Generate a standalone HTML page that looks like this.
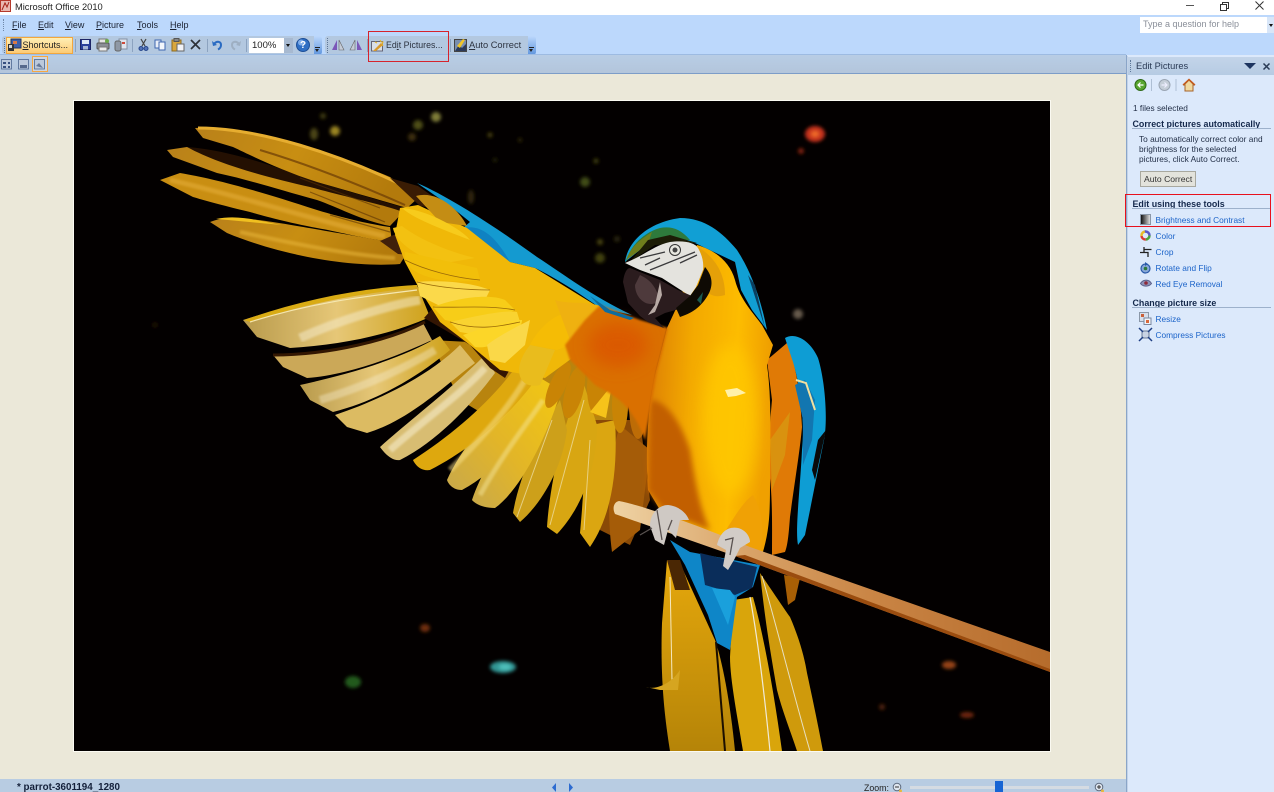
<!DOCTYPE html>
<html><head><meta charset="utf-8"><title>Microsoft Office 2010</title>
<style>
html,body{margin:0;padding:0;width:1274px;height:792px;overflow:hidden;background:#ebe8d9}
body{position:relative;font-family:"Liberation Sans",sans-serif;font-size:9px;color:#1a2030;filter:blur(.3px)}
.a{position:absolute}
.t{position:absolute;white-space:nowrap;line-height:11px}
.l{color:#1b63c9}
u{text-decoration:underline}
.h{font-weight:bold;color:#14284b;font-size:8.900px}
.r{position:absolute}
.p{font-size:8.300px;color:#1f2c44}
svg{position:absolute;overflow:visible}
</style></head><body>
<!-- title bar -->
<div class="a" style="left:0;top:0;width:1274px;height:15px;background:#fff"></div>
<svg style="left:0;top:0" width="12" height="13"><rect x=".5" y=".5" width="10" height="11" fill="#e9b9b0" stroke="#b5392c"/><path d="M2 10L5 3l2 4 2-5" stroke="#a52418" fill="none"/></svg>
<div class="t" style="left:15px;top:2px;font-size:9.300px;color:#222">Microsoft Office 2010</div>
<div class="a" style="left:1186px;top:5px;width:8px;height:1px;background:#555"></div>
<svg style="left:1220px;top:2px" width="9" height="9"><path d="M.5 2.500h6v6h-6zM2.500 2V.5h6v6H7" fill="none" stroke="#333"/></svg>
<svg style="left:1255px;top:1px" width="9" height="9"><path d="M.5.5l8 8M8.500.5l-8 8" stroke="#333" fill="none"/></svg>
<!-- menu & toolbar bg -->
<div class="a" style="left:0;top:15px;width:1274px;height:40px;background:#bcd8fc"></div>
<div class="t" style="left:12px;top:20px"><u>F</u>ile</div>
<div class="t" style="left:38px;top:20px"><u>E</u>dit</div>
<div class="t" style="left:65px;top:20px"><u>V</u>iew</div>
<div class="t" style="left:96px;top:20px"><u>P</u>icture</div>
<div class="t" style="left:137px;top:20px"><u>T</u>ools</div>
<div class="t" style="left:170px;top:20px"><u>H</u>elp</div>
<div class="a" style="left:3px;top:19px;width:1px;height:12px;border-left:1px dotted #6f87a8"></div>
<div class="a" style="left:1140px;top:17px;width:127px;height:16px;background:#fff"></div>
<div class="t" style="left:1143px;top:19px;color:#8a8f99;font-size:9px">Type a question for help</div>
<div class="a" style="left:1267px;top:17px;width:7px;height:16px;background:#d8e6f8"></div>
<div class="a" style="left:1269px;top:24px;border:2.500px solid transparent;border-top:3px solid #111;border-bottom:0"></div>
<!-- toolbar 1 -->
<div class="a" style="left:2px;top:36px;width:312px;height:18px;background:#b3c8e0;border-radius:3px 0 0 3px"></div>
<div class="a" style="left:314px;top:36px;width:8px;height:19px;background:linear-gradient(#bcd8fc,#5f95dd);border-radius:0 3px 3px 0"></div>
<div class="a" style="left:4px;top:38px;width:1px;height:15px;border-left:1px dotted #5d7698"></div>
<div class="a" style="left:6px;top:37px;width:65px;height:15px;background:linear-gradient(#ffefb5,#fbcb76);border:1px solid #f2a73e"></div>
<svg style="left:8px;top:39px" width="14" height="13"><rect x="3" y="0" width="10" height="9" fill="#3d5fa8" stroke="#26355f"/><rect x="5" y="2" width="4" height="3" fill="#d97a48"/><rect x="0" y="5" width="6" height="7" fill="#333"/><rect x="1" y="6" width="3" height="3" fill="#d4d4d4"/></svg>
<div class="t" style="left:22.500px;top:39.500px;color:#222;font-size:9px"><u>S</u>hortcuts...</div>
<div class="r" style="left:75px;top:39px;width:1px;height:13px;background:#8ca3c0"></div>
<svg style="left:80px;top:39px" width="12" height="12"><rect x=".5" y=".5" width="10" height="10" fill="#2b3f9a" stroke="#1c2466"/><rect x="2" y="1" width="7" height="4" fill="#dfe8f6"/><rect x="3" y="7" width="5" height="3.500" fill="#a9b7d6"/></svg>
<svg style="left:96px;top:38px" width="14" height="14"><rect x="3" y="1" width="8" height="5" fill="#e5e5e5" stroke="#777"/><rect x="1" y="5" width="12" height="6" rx="1" fill="#8b8e96" stroke="#555"/><rect x="3" y="9" width="8" height="4" fill="#eee" stroke="#777"/><circle cx="11" cy="3" r="2" fill="#6cab4a"/></svg>
<svg style="left:114px;top:38px" width="14" height="14"><rect x="5" y="1" width="8" height="10" fill="#dfe5ee" stroke="#8391a5"/><rect x="1" y="3" width="6" height="10" rx="2" fill="#8f98a5" stroke="#666"/><rect x="8" y="4" width="3" height="2" fill="#cf4a3a"/></svg>
<div class="r" style="left:132px;top:39px;width:1px;height:13px;background:#8ca3c0"></div>
<svg style="left:138px;top:38px" width="11" height="14"><path d="M3 1l4 7M8 1L4 8" stroke="#444" fill="none" stroke-width="1.200"/><circle cx="3" cy="10.500" r="2" fill="#5473b8" stroke="#25468c"/><circle cx="8" cy="10.500" r="2" fill="#5473b8" stroke="#25468c"/></svg>
<svg style="left:154px;top:39px" width="13" height="12"><rect x="1" y="1" width="6" height="8" fill="#e8eef8" stroke="#3e66b0"/><rect x="5" y="3" width="6" height="8" fill="#f4f7fc" stroke="#3e66b0"/></svg>
<svg style="left:171px;top:38px" width="14" height="14"><rect x="1" y="2" width="9" height="11" fill="#d9a73e" stroke="#8b6a20"/><rect x="3" y="0.500" width="5" height="3" fill="#888" stroke="#555"/><rect x="6" y="6" width="7" height="7" fill="#f2f3f6" stroke="#666"/></svg>
<svg style="left:190px;top:39px" width="11" height="11"><path d="M1 1l9 9M10 1L1 10" stroke="#2d3138" stroke-width="1.700" fill="none"/></svg>
<div class="r" style="left:207px;top:39px;width:1px;height:13px;background:#8ca3c0"></div>
<svg style="left:212px;top:40px" width="11" height="10"><path d="M2 4c3-3.500 7-2.500 7 1 0 2-1 3.500-3 4.500" stroke="#2a6bc2" stroke-width="2" fill="none"/><path d="M0 1l1 5 4-1z" fill="#2a6bc2"/></svg>
<svg style="left:230px;top:40px" width="11" height="10"><path d="M9 4C6 .5 2 1.500 2 5c0 2 1 3.500 3 4.500" stroke="#9eafc2" stroke-width="2" fill="none"/><path d="M11 1l-1 5-4-1z" fill="#9eafc2"/></svg>
<div class="r" style="left:246px;top:39px;width:1px;height:13px;background:#8ca3c0"></div>
<div class="a" style="left:249px;top:38px;width:35px;height:15px;background:#fff"></div>
<div class="t" style="left:252px;top:39.500px;color:#222;font-size:9.500px">100%</div>
<div class="a" style="left:284px;top:38px;width:9px;height:15px;background:#a7b9d0"></div>
<div class="a" style="left:286px;top:44px;border:2.500px solid transparent;border-top:3px solid #111;border-bottom:0"></div>
<svg style="left:296px;top:38px" width="14" height="14"><circle cx="7" cy="7" r="6.500" fill="#2f6fc4" stroke="#1d4f98"/><circle cx="5" cy="4.500" r="3" fill="#7fadea"/></svg>
<div class="t" style="left:300px;top:39.500px;color:#fff;font-weight:bold;font-size:10px">?</div>
<div class="a" style="left:315px;top:47px;width:5px;height:1px;background:#222"></div>
<div class="a" style="left:315px;top:49px;border:2.500px solid transparent;border-top:3px solid #222;border-bottom:0"></div>
<!-- toolbar 2 -->
<div class="a" style="left:325px;top:36px;width:203px;height:18px;background:#b3c8e0;border-radius:3px 0 0 3px"></div>
<div class="a" style="left:528px;top:36px;width:8px;height:19px;background:linear-gradient(#bcd8fc,#5f95dd);border-radius:0 3px 3px 0"></div>
<div class="a" style="left:327px;top:38px;width:1px;height:15px;border-left:1px dotted #5d7698"></div>
<svg style="left:331px;top:39px" width="14" height="12"><path d="M6 1L1 11h5z" fill="#7b58b8"/><path d="M8 1l5 10H8z" fill="#c5ccd8" stroke="#666" stroke-width=".6"/></svg>
<svg style="left:349px;top:39px" width="14" height="12"><path d="M6 1L1 11h5z" fill="#c5ccd8" stroke="#666" stroke-width=".6"/><path d="M8 1l5 10H8z" fill="#7b58b8"/></svg>
<div class="r" style="left:367px;top:39px;width:1px;height:13px;background:#8ca3c0"></div>
<svg style="left:371px;top:39px" width="14" height="13"><rect x=".5" y="2.500" width="11" height="9.500" fill="#d9dfe8" stroke="#667"/><path d="M2 12l8-8 2 2-7 6z" fill="#d99a2a"/><path d="M9 1l1 2 2 0-1 2 1 2M4 3l2 1" stroke="#e8b62c" fill="none"/></svg>
<div class="t" style="left:386px;top:39.500px;color:#2c3340;font-size:8.800px">Ed<u>i</u>t Pictures...</div>
<div class="r" style="left:450px;top:39px;width:1px;height:13px;background:#8ca3c0"></div>
<svg style="left:454px;top:38px" width="13" height="14"><rect x=".5" y="1.500" width="12" height="12" fill="#7a8fb0" stroke="#444"/><path d="M1 13l4-6 3 3 4-4v7z" fill="#2b3a5a"/><path d="M3 8l6-7 2 1-5 8z" fill="#f0c52a"/></svg>
<div class="t" style="left:469px;top:39.500px;color:#2c3340;font-size:9.300px"><u>A</u>uto Correct</div>
<div class="a" style="left:529px;top:47px;width:5px;height:1px;background:#222"></div>
<div class="a" style="left:529px;top:49px;border:2.500px solid transparent;border-top:3px solid #222;border-bottom:0"></div>
<!-- second row -->
<div class="a" style="left:0;top:54px;width:1126px;height:19px;background:linear-gradient(#b8cde5,#b3c5db);border-top:1px solid #9dbbe2;box-sizing:border-box"></div>
<div class="a" style="left:0;top:73px;width:1126px;height:1px;background:#7d9dc8"></div>
<div class="a" style="left:32px;top:56px;width:16px;height:16px;background:#cdd6e2;border:1px solid #f5a742;box-sizing:border-box"></div>
<svg style="left:1px;top:59px" width="46" height="11"><g fill="#bcc9dc" stroke="#4d6790" stroke-width=".8"><rect x=".5" y=".5" width="10" height="9.500"/><rect x="17.500" y=".5" width="10" height="9.500"/><rect x="33.500" y=".5" width="10" height="9.500"/></g><path d="M2 3h3v2H2zM7 3h2v2H7zM2 7h3v2H2zM7 7h2v2H7z" fill="#38507f"/><path d="M19 6h7v3h-7z" fill="#56698c"/><path d="M35 7l3-3 4 5z" fill="#66799a"/></svg>
<!-- canvas -->
<div class="a" style="left:0;top:74px;width:1126px;height:705px;background:#ebe8d9"></div>
<svg style="left:0;top:0" width="1274" height="792" viewBox="0 0 1274 792">
<defs>
<clipPath id="c"><rect x="74" y="101" width="976" height="650"/></clipPath>
<filter id="b3" x="-50%" y="-50%" width="200%" height="200%"><feGaussianBlur stdDeviation="3"/></filter>
<filter id="b1"><feGaussianBlur stdDeviation="1"/></filter>
<filter id="b2" x="-50%" y="-50%" width="200%" height="200%"><feGaussianBlur stdDeviation="1.800"/></filter>
<filter id="b5" x="-40%" y="-40%" width="180%" height="180%"><feGaussianBlur stdDeviation="8"/></filter>
<linearGradient id="g1" x1="0" y1="0" x2="1" y2=".2"><stop offset="0" stop-color="#b9811a"/><stop offset=".5" stop-color="#c88e12"/><stop offset="1" stop-color="#b37a0c"/></linearGradient>
<linearGradient id="g2" x1="0" y1="0" x2="1" y2="0"><stop offset="0" stop-color="#b89a4c"/><stop offset=".5" stop-color="#e6c777"/><stop offset="1" stop-color="#cfa21a"/></linearGradient>
<linearGradient id="g3" x1="0" y1="1" x2="1" y2="0"><stop offset="0" stop-color="#c9a94a"/><stop offset=".45" stop-color="#e2b528"/><stop offset="1" stop-color="#f2c712"/></linearGradient>
<linearGradient id="p" x1="0" y1="0" x2="1" y2="0"><stop offset="0" stop-color="#efd3a4"/><stop offset=".3" stop-color="#d9a469"/><stop offset=".6" stop-color="#c98444"/><stop offset="1" stop-color="#b66c2c"/></linearGradient>
<linearGradient id="body" x1="0" y1="0" x2="1" y2=".15"><stop offset="0" stop-color="#d97705"/><stop offset=".4" stop-color="#f3a900"/><stop offset=".75" stop-color="#fdbc00"/><stop offset="1" stop-color="#f0a000"/></linearGradient>
<linearGradient id="tail" x1="0" y1="0" x2="0" y2="1"><stop offset="0" stop-color="#e6a80c"/><stop offset="1" stop-color="#b58408"/></linearGradient>
</defs>
<rect x="73" y="100" width="978" height="652" fill="#fbfaf2"/>
<g clip-path="url(#c)">
<rect x="74" y="101" width="976" height="650" fill="#030000"/>
<!-- bokeh -->
<g filter="url(#b2)">
<ellipse cx="815" cy="134" rx="10" ry="8" fill="#c5301a"/><ellipse cx="815" cy="134" rx="4" ry="3" fill="#f06a2a"/>
<ellipse cx="801" cy="151" rx="3" ry="3" fill="#802010"/>
<circle cx="335" cy="131" r="5" fill="#9a8420"/><ellipse cx="314" cy="134" rx="4" ry="6" fill="#4c4512"/>
<circle cx="436" cy="117" r="5" fill="#7e7c38"/><circle cx="418" cy="125" r="5" fill="#4d4d12"/><circle cx="412" cy="137" r="4" fill="#3c2e0c"/><circle cx="323" cy="116" r="3" fill="#3d3a10"/>
<circle cx="490" cy="135" r="2.500" fill="#4a420f"/><circle cx="520" cy="140" r="2" fill="#332c0c"/><circle cx="495" cy="160" r="2" fill="#26270a"/><circle cx="585" cy="182" r="5" fill="#3f4c16"/><circle cx="596" cy="161" r="2.500" fill="#424210"/><ellipse cx="471" cy="197" rx="3" ry="7" fill="#30280a"/>
<circle cx="600" cy="242" r="3" fill="#48440d"/><circle cx="600" cy="258" r="5" fill="#40400f"/><circle cx="617" cy="239" r="3" fill="#2c280c"/>
<circle cx="798" cy="314" r="5" fill="#665a4c"/>
<ellipse cx="503" cy="667" rx="13" ry="6" fill="#309694"/><ellipse cx="505" cy="667" rx="6" ry="3" fill="#50c0bc"/>
<ellipse cx="353" cy="682" rx="8" ry="6" fill="#245a1a"/>
<ellipse cx="425" cy="628" rx="5" ry="4" fill="#702d0c"/>
<ellipse cx="949" cy="665" rx="7" ry="4" fill="#944318"/><ellipse cx="967" cy="715" rx="7" ry="3" fill="#70280b"/><ellipse cx="882" cy="707" rx="3" ry="3" fill="#50240a"/>
<ellipse cx="155" cy="325" rx="2.500" ry="2.500" fill="#221506"/>
</g>
<!-- primaries top -->
<path d="M187 147C230 150 280 168 320 183L405 208 395 222 300 190 200 160z" fill="#241002"/>
<path d="M195 128C240 125 320 148 390 177L418 198 407 208C380 200 345 190 317 182 280 170 250 155 233 147L203 138z" fill="url(#g1)"/>
<path d="M198 128C260 128 340 155 400 184" stroke="#e6ad30" stroke-width="3" fill="none"/>
<path d="M260 150C310 165 360 185 405 205" stroke="#6a3a06" stroke-width="2" fill="none" opacity=".7"/>
<path d="M167 150L187 147C220 165 270 178 310 187 350 198 385 205 403 212L390 226C360 220 340 208 317 200 280 190 250 180 217 173L173 157z" fill="url(#g1)"/>
<path d="M160 180L180 173C210 178 250 188 317 210 350 220 375 225 390 227L392 242C360 238 340 232 317 228 285 222 260 215 250 212 225 206 210 202 193 197z" fill="#c98e12"/>
<path d="M170 180C240 196 320 222 385 236" stroke="#e0a830" stroke-width="5" fill="none" opacity=".7" filter="url(#b1)"/>
<path d="M210 222C235 212 270 222 397 243L407 253 400 264C350 268 280 255 227 233z" fill="url(#g1)"/>
<path d="M216 219C240 214 262 222 282 225L228 220z" fill="#f0c020"/>
<path d="M240 232C300 245 350 255 395 258" stroke="#e5b238" stroke-width="4" fill="none" opacity=".6" filter="url(#b1)"/>
<path d="M380 241L405 230 412 255 398 254z" fill="#40200a"/>
<path d="M300 178L380 208M310 192L385 222M330 215L390 232" stroke="#5a3205" stroke-width="1.200" fill="none" opacity=".6"/>
<!-- lower base -->
<path d="M430 340L530 345 620 370 625 470 560 450 510 430 460 400z" fill="#b8840e"/>
<path d="M590 420L640 420 650 500 630 545 600 530z" fill="#8a4a06"/>
<!-- lower feathers -->
<path d="M612 552C605 500 612 450 620 425L650 450 640 530z" fill="#a55c08"/>
<path d="M580 533C585 480 585 440 592 425L615 420C618 470 612 515 590 547z" fill="#dba611"/>
<path d="M547 527C550 480 565 420 582 378L597 425C597 470 580 510 557 534z" fill="#d8a612"/>
<path d="M513 513C520 470 545 425 560 400L567 430C562 470 540 505 520 522z" fill="#cda01a"/>
<path d="M472 500C485 460 520 415 543 390L558 400C545 440 520 490 495 508 478 508 472 500 472 500z" fill="url(#g3)"/>
<path d="M447 480C465 440 505 400 527 370L552 385C530 430 500 470 462 490 450 490 447 480 447 480z" fill="url(#g3)"/>
<path d="M413 460C460 430 510 385 530 343L545 365C525 400 480 445 430 470 418 472 413 460 413 460z" fill="#dea80e"/>
<path d="M380 447C410 420 450 390 485 355L495 373C475 400 440 440 400 460 390 462 380 447 380 447z" fill="#d8bd72"/>
<path d="M335 415C380 400 430 375 460 345L475 363C445 385 410 420 367 433L347 427z" fill="#dcbb62"/>
<path d="M300 385C345 375 400 360 440 336L450 350C420 375 380 400 333 412L310 400z" fill="url(#g2)"/>
<path d="M273 355C330 355 390 340 423 323L432 340C400 355 350 375 307 378L283 367z" fill="#cba858"/>
<path d="M273 355C330 355 390 340 425 322" stroke="#331702" stroke-width="3" fill="none"/>
<path d="M243 320C290 305 360 290 417 285L430 317C390 335 340 345 290 348L257 337z" fill="url(#g2)"/>
<path d="M244 320C300 300 360 288 417 285L416 288C360 293 300 305 250 322z" fill="#d9ab14"/>
<path d="M250 322C310 303 360 297 417 290" stroke="#f5e7b0" stroke-width="1.200" fill="none"/>
<path d="M300 338C340 320 390 305 420 300" stroke="#f6edd0" stroke-width="9" fill="none" opacity=".5" filter="url(#b1)"/>
<path d="M320 400C370 385 410 365 435 350" stroke="#f6edd0" stroke-width="8" fill="none" opacity=".4" filter="url(#b1)"/>
<path d="M390 450C430 415 460 395 485 368" stroke="#f8efd0" stroke-width="7" fill="none" opacity=".55" filter="url(#b1)"/>
<path d="M450 470C490 430 510 405 525 380" stroke="#f7e08a" stroke-width="6" fill="none" opacity=".5" filter="url(#b1)"/>
<path d="M480 495C505 450 530 420 543 400" stroke="#f7e9a0" stroke-width="5" fill="none" opacity=".45" filter="url(#b1)"/>
<path d="M550 525L584 400M584 530L590 440M517 517L552 420" stroke="#f0e2b0" stroke-width="1" fill="none" opacity=".7"/>
<!-- amber under-arm feathers -->
<g fill="#c98405"><ellipse cx="558" cy="385" rx="8" ry="25" transform="rotate(25 558 385)"/><ellipse cx="574" cy="392" rx="9" ry="27" transform="rotate(15 574 392)"/><ellipse cx="597" cy="388" rx="10" ry="28"/><ellipse cx="620" cy="405" rx="8" ry="28"/></g>
<ellipse cx="638" cy="405" rx="9" ry="34" fill="#bd6c06"/>
<path d="M590 412L612 385 606 418z" fill="#f6c31a"/>
<!-- dark patch under coverts -->
<path d="M424 318L445 330 470 345 490 368 505 378 515 360 480 335 440 300z" fill="#331503"/>
<!-- blue leading edge -->
<path d="M417 183C450 197 500 230 537 257 565 275 590 295 632 315L600 308C575 290 550 275 535 268L510 262C495 250 480 240 463 228L470 222C450 205 430 192 417 183z" fill="#149ad0"/>
<path d="M463 228C480 224 495 235 510 262L490 250z" fill="#0f82c2"/>
<!-- coverts -->
<path d="M390 178L418 186 455 212 420 206z" fill="#3a1c04"/>
<path d="M400 208L418 205 467 228 510 262 535 268 600 308 590 345 545 378 500 370 470 345 440 322 420 290 405 262 395 235z" fill="#f0b808"/>
<path d="M416 196C436 190 458 208 467 226L440 222z" fill="#c48d14"/>
<path d="M402 208C415 220 450 232 470 240 465 232 430 210 402 208z" fill="#f7cb1c"/>
<path d="M402 226C420 240 450 252 475 258L440 264C420 258 395 242 393 228z" fill="#f3c111"/>
<path d="M405 252C420 255 450 262 477 268L480 280C450 285 410 277 405 260z" fill="#f2bf0a"/>
<path d="M417 282C440 280 470 282 490 290L485 300 440 306 420 296z" fill="#fbd94a"/>
<path d="M433 307C455 298 490 293 505 300L515 310 490 320 470 325 445 320z" fill="#f7cd18"/>
<path d="M450 322C480 315 505 310 517 312L520 322C505 335 480 336 460 332z" fill="#f9d330"/>
<path d="M463 335C490 325 515 320 522 320 522 335 490 350 475 347z" fill="#fcd628"/>
<path d="M487 345C500 335 520 325 530 320L525 345 505 363 490 360z" fill="#fad848"/>
<path d="M417 282C440 288 470 290 490 290M433 307C460 308 490 305 515 310M450 322C480 332 505 325 520 322M405 260C425 270 455 278 480 280" stroke="#9a6a08" stroke-width=".8" fill="none"/>
<path d="M530 345C540 325 560 310 570 315L590 320 570 345 557 350z" fill="#f5bc05"/>
<path d="M555 300C570 305 590 300 605 308L585 345 570 340z" fill="#efb110"/>
<path d="M530 345C510 370 520 390 540 385L555 350z" fill="#e9bc1d"/>
<!-- tail feathers -->
<path d="M667 560L662 623C660 680 665 720 670 751L735 751C730 700 722 660 715 640L683 570z" fill="url(#tail)"/>
<path d="M670 577L672 680" stroke="#f5e8c0" stroke-width="1" fill="none"/>
<path d="M646 687C655 690 670 685 680 670L678 690 660 690z" fill="#d6a520"/>
<path d="M667 560L680 560 690 590 675 590z" fill="#4a2704"/>
<path d="M733 600L753 597C765 640 775 700 782 751H743C738 720 730 680 730 657z" fill="#d9a50b"/>
<path d="M750 597C758 640 765 700 770 751" stroke="#f0ead8" stroke-width="1.200" fill="none"/>
<path d="M716 642L725 751" stroke="#1c0f00" stroke-width="2" fill="none"/>
<path d="M760 573C775 595 785 610 790 617 800 640 805 660 807 673 815 710 820 735 823 751H797C790 730 782 710 777 690 770 650 765 620 760 573z" fill="#cf9a0c"/>
<path d="M762 576C775 620 795 700 810 751" stroke="#e7dfc0" stroke-width="1" fill="none"/>
<path d="M784 575L800 578 795 600 788 605z" fill="#a85f05"/>
<path d="M670 540L690 552 760 565 753 587 737 597 730 650 717 643 708 615 685 565z" fill="#0e86c8"/>
<path d="M700 553L757 567 752 588 735 595 722 590 705 585z" fill="#0a2d5a"/>
<path d="M712 588L730 590 735 597 728 625z" fill="#1aa0dc"/>
<!-- right wing -->
<path d="M767 360L787 343C795 360 800 390 802 427 800 450 795 480 790 517 789 530 788 545 785 552L772 555C772 520 773 490 767 457L772 400z" fill="#e07a06"/>
<path d="M770 440L790 412 785 455 772 490z" fill="#d9920f"/>
<path d="M785 338C795 332 810 340 818 358 825 380 828 420 824 440 818 470 812 500 805 535L798 545C795 530 800 490 802 450 805 420 800 385 793 362z" fill="#0e9dd4"/>
<path d="M795 385L805 380 815 400 812 440 803 465 803 420z" fill="#1276b0"/>
<path d="M796 380L806 383 815 410" stroke="#f0e0a0" stroke-width="2" fill="none"/>
<path d="M812 470L818 440 826 430 815 480z" fill="#0a0a0a"/>
<!-- body -->
<path d="M697 245C715 250 730 262 735 280 740 300 755 315 762 325L773 345 767 365C772 400 770 440 770 480 770 510 770 530 762 555L700 535 660 510 648 490C645 450 648 400 657 367L667 328 680 300z" fill="url(#body)"/>
<ellipse cx="730" cy="420" rx="28" ry="75" fill="#ffc800" opacity=".85" filter="url(#b5)"/>
<path d="M650 400C665 400 680 420 690 450 695 480 700 510 710 530L665 512 648 490z" fill="#c25e05" filter="url(#b3)"/>
<path d="M695 245C712 255 725 270 725 295 710 300 700 290 695 265z" fill="#e5a008"/>
<path d="M725 390l12-2 9 5-10 3-8 1z" fill="#fff1a8"/>
<path d="M720 540C735 515 745 500 753 495 762 510 765 530 760 555z" fill="#f0a105"/>
<!-- arm -->
<path d="M600 305L640 320 668 328 657 372 645 440C630 400 612 395 595 385L570 360 565 345 585 320z" fill="#da7006" filter="url(#b1)"/>
<ellipse cx="618" cy="345" rx="30" ry="22" fill="#db5605" opacity=".85" filter="url(#b5)"/>
<path d="M590 296L610 310 634 318 630 320 605 312z" fill="#0d6da0"/>
<!-- head -->
<path d="M625 262C628 240 650 222 680 218 705 218 722 232 737 250 750 270 760 295 767 330L752 310 741 290 735 262 695 243 655 240 640 250z" fill="#119fd4"/>
<path d="M762 315L755 285 748 275 765 328z" fill="#0b3f60"/>
<path d="M626 262C630 245 645 232 660 228 670 226 680 228 690 240L655 240 630 255z" fill="#2e7a3c"/>
<path d="M626 260C632 245 640 240 652 232L648 244 632 256z" fill="#6f7e1c"/>
<path d="M648 240L670 235 697 243 655 245 630 262z" fill="#1c1c06"/>
<path d="M625 263C645 255 655 245 670 242 685 240 695 243 698 248 702 255 704 262 703 270L696 287 690 296 662 278 640 270z" fill="#e4e3de"/>
<path d="M640 258L665 252M645 265L660 258M650 270L695 252M680 263L697 255" stroke="#3a3a3c" stroke-width="1.300" fill="none"/>
<circle cx="675" cy="250" r="5.500" fill="#e7e7df" stroke="#333"/><circle cx="675" cy="250" r="2.500" fill="#444"/>
<path d="M623 282C624 273 627 268 630 268L660 280 678 290 692 296 683 308 665 313 655 318 664 328 648 322 640 316 628 303z" fill="#2b1c1e"/>
<path d="M640 275C650 280 655 285 660 300 650 310 635 300 635 285z" fill="#4e3a3c"/>
<path d="M660 282L655 305 648 315 655 312 662 295z" fill="#b8aaa5"/>
<path d="M705 267C712 275 714 285 708 295 702 305 695 312 680 317L676 308 690 296 698 285z" fill="#0e0a04"/>
<path d="M697 300l6-8-2 12z" fill="#1a5a50"/>
<!-- perch -->
<path d="M619 501C640 505 690 522 750 547L1050 652V672L735 556 615 514C612 508 614 502 619 501z" fill="url(#p)"/>
<path d="M735 556L1050 672V669L745 555z" fill="#9a4c0f"/>
<!-- feet -->
<path d="M650 526C650 512 660 505 668 505 678 506 686 512 689 520L680 520 676 538 668 530 664 545 655 540z" fill="#cfc9c4"/>
<path d="M640 535L652 528M657 510L662 540M672 520L668 530" stroke="#5a5250" stroke-width="1.300" fill="none"/>
<path d="M717 545C720 532 728 526 738 528 746 530 750 537 750 542L740 548 734 560 728 570 723 566 726 550z" fill="#d2ccc7"/>
<path d="M725 540L733 538 730 555" stroke="#5a5250" stroke-width="1.300" fill="none"/>
</g>
</svg>
<!-- status bar -->
<div class="a" style="left:0;top:779px;width:1126px;height:13px;background:#b8cce2"></div>
<div class="t" style="left:17px;top:781.500px;font-weight:bold;color:#14203a;font-size:9.800px">* parrot-3601194_1280</div>
<svg style="left:549px;top:783px" width="26" height="9"><path d="M7 0L3 4.500 7 9z" fill="#2d6bd0"/><path d="M20 0l4 4.500L20 9z" fill="#2d6bd0"/></svg>
<div class="t" style="left:864px;top:783px;color:#222;font-size:8.800px">Zoom:</div>
<svg style="left:892px;top:782px" width="10" height="10"><circle cx="5" cy="5" r="3.800" fill="#dfe6ef" stroke="#5d6a7e"/><path d="M3 5h4" stroke="#333"/><circle cx="8.500" cy="9" r="1.500" fill="#e7b73e"/></svg>
<div class="a" style="left:910px;top:786px;width:179px;height:3px;background:#d5dbe2"></div>
<div class="a" style="left:995px;top:781px;width:8px;height:11px;background:#1664d4"></div>
<svg style="left:1094px;top:782px" width="10" height="10"><circle cx="5" cy="5" r="3.800" fill="#dfe6ef" stroke="#5d6a7e"/><path d="M3 5h4M5 3v4" stroke="#333"/><circle cx="8.500" cy="9" r="1.500" fill="#e7b73e"/></svg>
<!-- task pane -->
<div class="a" style="left:1126px;top:55px;width:148px;height:737px;background:#dce9fb;border-left:1px solid #8aa5c8;box-sizing:border-box"></div>
<div class="a" style="left:1127px;top:56px;width:1px;height:736px;background:#c3d3e8"></div>
<div class="a" style="left:1128px;top:57px;width:146px;height:18px;background:linear-gradient(#c3d4e9,#b6cbe3)"></div>
<div class="a" style="left:1130px;top:60px;width:1px;height:12px;border-left:1px dotted #5d7698"></div>
<div class="t" style="left:1136px;top:61px;color:#2a3a55;font-size:9.300px">Edit Pictures</div>
<div class="a" style="left:1244px;top:63px;border:6px solid transparent;border-top:6px solid #1e3560;border-bottom:0"></div>
<svg style="left:1263px;top:63px" width="7" height="7"><path d="M.5.5l6 6M6.500.5l-6 6" stroke="#2a3a55" stroke-width="1.500"/></svg>
<svg style="left:1134px;top:78px" width="62" height="14"><circle cx="6.500" cy="7" r="5.500" fill="#58a630" stroke="#2f6a18"/><path d="M9.500 7h-5M6.500 4.500L4 7l2.500 2.500" stroke="#fff" fill="none" stroke-width="1.200"/><path d="M17.500 1v12" stroke="#aebfd4"/><circle cx="30.500" cy="7" r="5.500" fill="#c5ced8" stroke="#9aa5b3"/><path d="M27.500 7h5M30.500 4.500L33 7l-2.500 2.500" stroke="#eef" fill="none" stroke-width="1.200"/><path d="M42 1v12" stroke="#aebfd4"/><path d="M50 7l5-5 5 5h-1v6h-8V7z" fill="#f0d9a0" stroke="#a6622a"/><path d="M49 7l6-5.500L61 7" stroke="#c55a1e" fill="none" stroke-width="1.400"/></svg>
<div class="t p" style="left:1133px;top:102.500px">1 files selected</div>
<div class="t h" style="left:1132.500px;top:118.500px">Correct pictures automatically</div>
<div class="a" style="left:1132px;top:128px;width:139px;height:1px;background:#9db1cb"></div>
<div class="t p" style="left:1139px;top:134px">To automatically correct color and</div>
<div class="t p" style="left:1139px;top:144px">brightness for the selected</div>
<div class="t p" style="left:1139px;top:154px">pictures, click Auto Correct.</div>
<div class="a" style="left:1140px;top:171px;width:56px;height:16px;background:#e3e3dc;border:1px solid #a8a89f;box-sizing:border-box"></div>
<div class="t" style="left:1144px;top:174px;color:#333;font-size:8.600px">Auto Correct</div>
<div class="t h" style="left:1132.500px;top:198.500px">Edit using these tools</div>
<div class="a" style="left:1132px;top:208px;width:139px;height:1px;background:#9db1cb"></div>
<div class="a" style="left:1140px;top:214px;width:11px;height:11px;background:linear-gradient(90deg,#111,#ddd);border:1px solid #8a97a8;box-sizing:border-box"></div>
<div class="t p l" style="left:1155.500px;top:214.500px;color:#1b63c9">Brightness and Contrast</div>
<svg style="left:1140px;top:230px" width="12" height="12"><circle cx="5.500" cy="5.500" r="4" fill="none" stroke="#4da33a" stroke-width="2.500" stroke-dasharray="6 20"/><circle cx="5.500" cy="5.500" r="4" fill="none" stroke="#d93a35" stroke-width="2.500" stroke-dasharray="6 20" stroke-dashoffset="-6"/><circle cx="5.500" cy="5.500" r="4" fill="none" stroke="#e9bb2a" stroke-width="2.500" stroke-dasharray="7 20" stroke-dashoffset="-12"/><circle cx="5.500" cy="5.500" r="4" fill="none" stroke="#5a57c8" stroke-width="2.500" stroke-dasharray="7 20" stroke-dashoffset="-18"/></svg>
<div class="t p" style="left:1155.500px;top:230.500px;color:#1b63c9">Color</div>
<svg style="left:1140px;top:246px" width="12" height="12"><path d="M0 6.500h8V11M4 1v5.500M4 3.500h7.500" stroke="#222" fill="none" stroke-width="1.300"/></svg>
<div class="t p" style="left:1155.500px;top:246.500px;color:#1b63c9">Crop</div>
<svg style="left:1140px;top:262px" width="12" height="12"><circle cx="5.500" cy="6.500" r="4.500" fill="#8aa9d9" stroke="#2a5aa8" stroke-width="1.200"/><circle cx="5.500" cy="6.500" r="1.800" fill="#2e7a3c"/><path d="M5 0l3 2-3 2z" fill="#2a5aa8"/></svg>
<div class="t p" style="left:1155.500px;top:262.500px;color:#1b63c9">Rotate and Flip</div>
<svg style="left:1140px;top:279px" width="12" height="9"><path d="M.5 4.500C3 0 9 0 11.500 4.500 9 8 3 8 .5 4.500z" fill="#8d93b8" stroke="#5a5f8a"/><circle cx="6" cy="4" r="1.800" fill="#8e2a3a"/></svg>
<div class="t p" style="left:1155.500px;top:278.500px;color:#1b63c9">Red Eye Removal</div>
<div class="t h" style="left:1132.500px;top:297.500px">Change picture size</div>
<div class="a" style="left:1132px;top:307px;width:139px;height:1px;background:#9db1cb"></div>
<svg style="left:1139px;top:312px" width="13" height="13"><rect x=".5" y=".5" width="9" height="9" fill="#d7deea" stroke="#8a97a8"/><rect x="5" y="6" width="7" height="6.500" fill="#f0f3f8" stroke="#7a88a0"/><rect x="7" y="8" width="3" height="3" fill="#d9683a"/><rect x="2" y="2" width="3" height="3" fill="#c9603a"/></svg>
<div class="t p" style="left:1155.500px;top:313.500px;color:#1b63c9">Resize</div>
<svg style="left:1139px;top:328px" width="13" height="13"><rect x="3" y="3" width="7" height="7" fill="#c8d3e4" stroke="#6a7a94"/><path d="M0 0l4 4M13 0L9 4M0 13l4-4M13 13L9 9" stroke="#1e3f84" stroke-width="1.500"/></svg>
<div class="t p" style="left:1155.500px;top:329.500px;color:#1b63c9">Compress Pictures</div>
<!-- red highlight rectangles -->
<div class="a" style="left:368px;top:31px;width:81px;height:31px;border:1.500px solid #d6232c;box-sizing:border-box"></div>
<div class="a" style="left:1125px;top:194px;width:146px;height:33px;border:1.500px solid #e8101c;box-sizing:border-box"></div>
</body></html>
